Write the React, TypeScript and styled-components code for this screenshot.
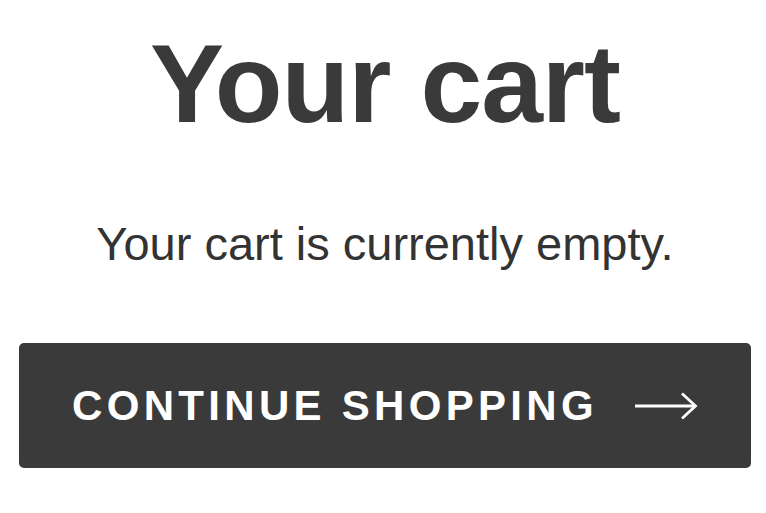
import React from "react";
import styled, { createGlobalStyle } from "styled-components";

const GlobalStyle = createGlobalStyle`
  html, body {
    margin: 0;
    padding: 0;
    background: #ffffff;
  }
  body {
    font-family: "Liberation Sans", Arial, Helvetica, sans-serif;
  }
`;

const Page = styled.main`
  width: 766px;
  height: 513px;
  box-sizing: border-box;
  padding: 0 15px 0 19px;
  display: flex;
  flex-direction: column;
  align-items: center;
`;

const Title = styled.h1`
  margin: 26px 0 0;
  font-size: 111px;
  line-height: 116px;
  font-weight: 700;
  letter-spacing: -1px;
  color: #3a3a3a;
`;

const Message = styled.p`
  margin: 75px 0 0;
  font-size: 47px;
  line-height: 54px;
  color: #333333;
`;

const ContinueButton = styled.a`
  margin-top: 72px;
  width: 732px;
  height: 125px;
  box-sizing: border-box;
  border-radius: 5px;
  background: #3a3a3a;
  color: #ffffff;
  text-decoration: none;
  display: flex;
  align-items: center;
  justify-content: center;
  gap: 36px;
  cursor: pointer;
`;

const Label = styled.span`
  font-size: 42px;
  font-weight: 700;
  letter-spacing: 4.3px;
  text-transform: uppercase;
  line-height: 1;
`;

const Arrow = () => (
  <svg width="64" height="28" viewBox="0 0 64 28" fill="none" aria-hidden="true">
    <path d="M1 14 H61" stroke="#fff" strokeWidth="2.8" />
    <path d="M48 1.5 L61.5 14 L48 26.5" stroke="#fff" strokeWidth="2.8" strokeLinejoin="miter" />
  </svg>
);

export default function App() {
  return (
    <>
      <GlobalStyle />
      <Page>
        <Title>Your cart</Title>
        <Message>Your cart is currently empty.</Message>
        <ContinueButton href="#">
          <Label>Continue shopping</Label>
          <Arrow />
        </ContinueButton>
      </Page>
    </>
  );
}
